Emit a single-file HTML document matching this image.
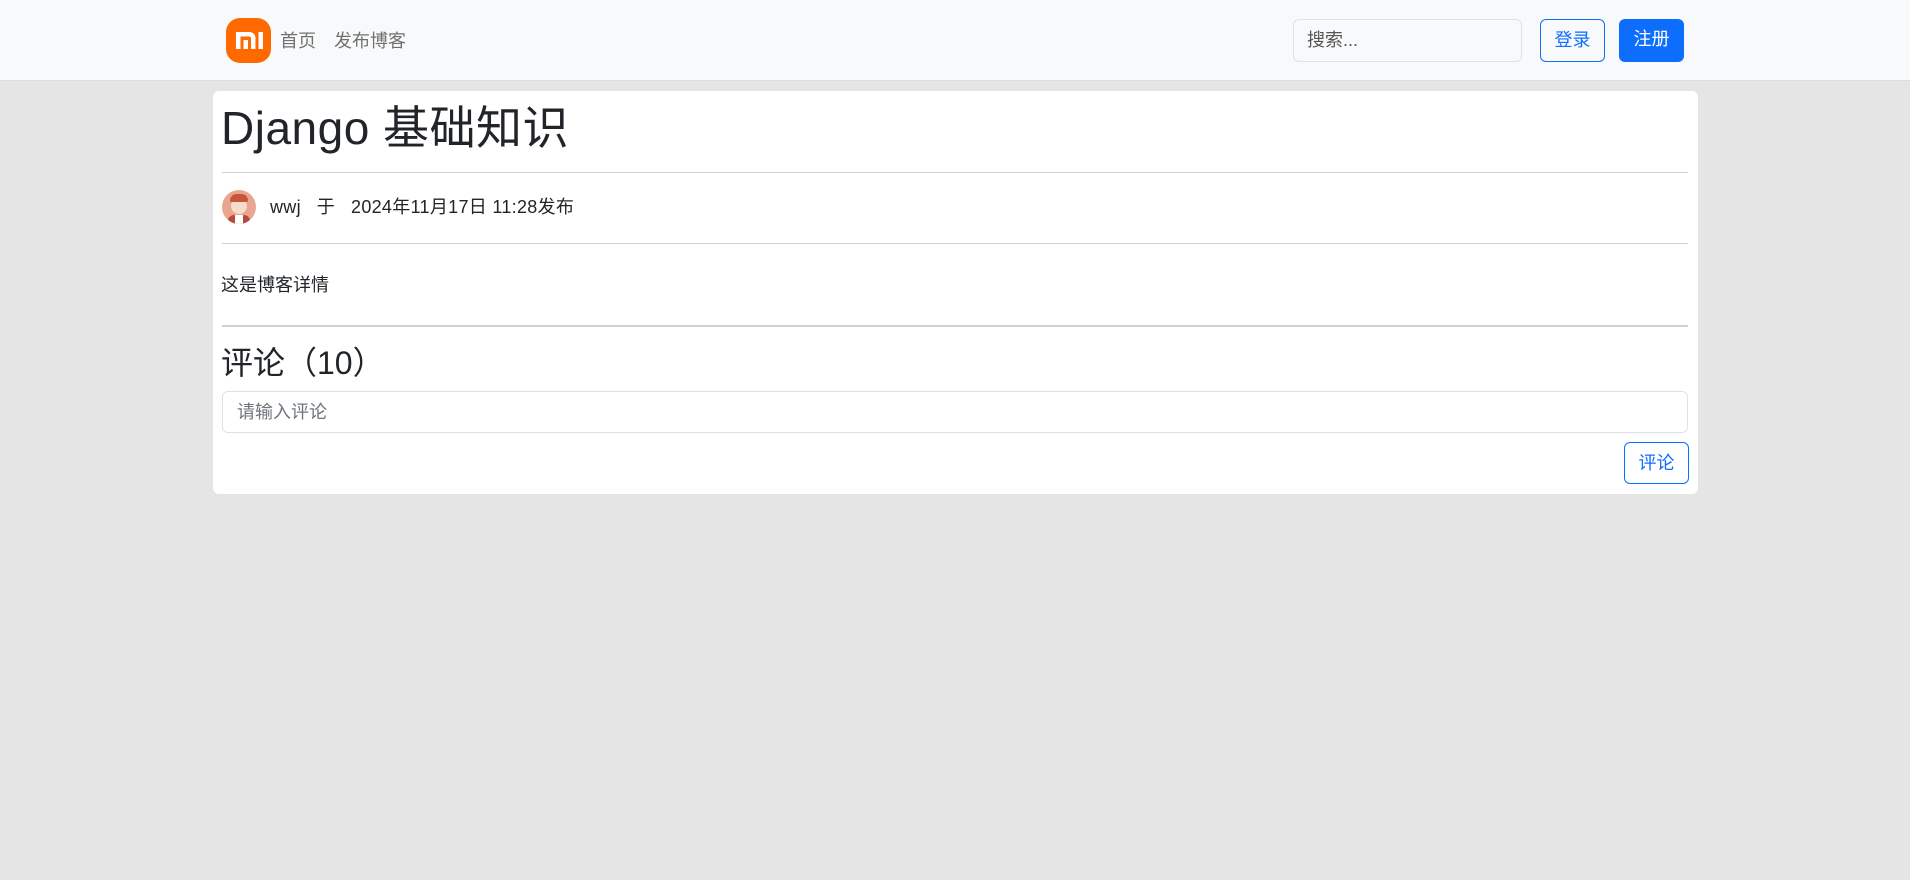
<!DOCTYPE html>
<html><head><meta charset="utf-8"><style>
*{box-sizing:border-box;margin:0;padding:0}
body{width:1910px;height:880px;background:#e5e5e5;font-family:"Liberation Sans","Noto Sans CJK SC",sans-serif;color:#212529;position:relative;overflow:hidden;font-size:18px}
.nav{position:absolute;left:0;top:0;width:1910px;height:81px;background:#f8f9fa;border-bottom:1px solid #dcdcdc}
.abs{position:absolute}
.logo{left:226px;top:18px;width:45px;height:45px;background:#ff6900;border-radius:14px}
.navt{top:28px;color:rgba(0,0,0,.55);font-size:18px;line-height:24px}
.search{left:1293px;top:19px;width:229px;height:43px;border:1px solid #dee2e6;border-radius:6px;background:#f8f9fa;color:#555;padding:0 13px;line-height:41px;font-size:18px}
.btn{top:19px;height:43px;border-radius:6px;font-size:18px;line-height:41px;text-align:center}
.card{left:213px;top:91px;width:1485px;height:403px;background:#fff;border-radius:6px}
.hr{left:222px;width:1466px;height:1px;background:#cfcfcf}
</style></head><body>
<div class="nav"></div>
<div class="abs logo"><svg width="45" height="45" viewBox="0 0 45 45"><path d="M10 14H23.5a6 6 0 0 1 6 6V31H25V20.5a2 2 0 0 0-2-2H14.5V31H10zM17.5 22H22v9H17.5zM32.5 14H37v17h-4.5z" fill="#fff"/></svg></div>
<div class="abs navt" style="left:280px;top:29px">首页</div>
<div class="abs navt" style="left:334px;top:29px">发布博客</div>
<div class="abs search">搜索...</div>
<div class="abs btn" style="left:1540px;width:65px;border:1px solid #0d6efd;color:#0d6efd">登录</div>
<div class="abs btn" style="left:1619px;width:65px;background:#0d6efd;color:#fff">注册</div>
<div class="abs card"></div>
<div class="abs" style="left:221px;top:97px;font-size:46px;line-height:62px;letter-spacing:0.5px">Django 基础知识</div>
<div class="abs hr" style="top:172px"></div>
<div class="abs" style="left:222px;top:190px;width:34px;height:34px;border-radius:50%;background:#e8a590;overflow:hidden">
<div class="abs" style="left:9px;top:8px;width:16px;height:16px;border-radius:50%;background:#f6dccb"></div>
<div class="abs" style="left:8px;top:4px;width:18px;height:8px;border-radius:8px 8px 2px 2px;background:#c8553d"></div>
<div class="abs" style="left:6px;top:25px;width:22px;height:12px;border-radius:6px 6px 0 0;background:#b84a3a"></div>
<div class="abs" style="left:13px;top:25px;width:8px;height:10px;background:#fff"></div>
</div>
<div class="abs" style="left:270px;top:195px;font-size:18px;line-height:24px;letter-spacing:0.3px">wwj&nbsp;&nbsp;&nbsp;于&nbsp;&nbsp;&nbsp;2024年11月17日 11:28发布</div>
<div class="abs hr" style="top:243px"></div>
<div class="abs" style="left:221px;top:273px;font-size:18px;line-height:24px">这是博客详情</div>
<div class="abs hr" style="top:325px;height:2px;background:#d0d0d0"></div>
<div class="abs" style="left:221px;top:342px;font-size:32px;line-height:42px">评论（10）</div>
<div class="abs" style="left:222px;top:391px;width:1466px;height:42px;border:1px solid #dee2e6;border-radius:6px;color:#6c757d;padding-left:14px;line-height:40px;font-size:18px">请输入评论</div>
<div class="abs btn" style="left:1624px;top:442px;width:65px;height:42px;border:1px solid #0d6efd;color:#0d6efd;line-height:40px">评论</div>
</body></html>
